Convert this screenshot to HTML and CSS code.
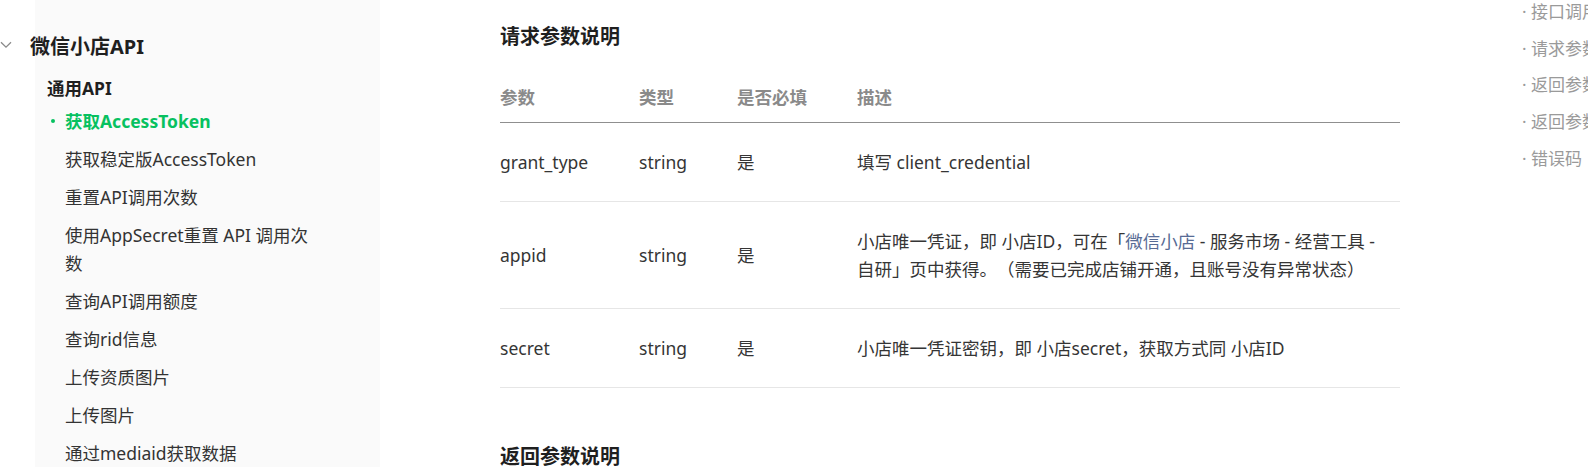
FILE: index.html
```html
<!DOCTYPE html>
<html lang="zh-CN">
<head>
<meta charset="utf-8">
<title>获取AccessToken</title>
<link rel="stylesheet" href="styles.css">
</head>
<body>
<div class="page">
  <nav class="sidebar">
    <div class="group-title">
      <svg class="chevron" width="12" height="8" viewBox="0 0 12 8"><path d="M1 1.2 L6 6.2 L11 1.2" fill="none" stroke="#8a8a8a" stroke-width="1.3"/></svg>
      <span>微信小店API</span>
    </div>
    <div class="sub-title">通用API</div>
    <ul class="items">
      <li class="item active">获取AccessToken</li>
      <li class="item">获取稳定版AccessToken</li>
      <li class="item">重置API调用次数</li>
      <li class="item">使用AppSecret重置 API 调用次数</li>
      <li class="item">查询API调用额度</li>
      <li class="item">查询rid信息</li>
      <li class="item">上传资质图片</li>
      <li class="item">上传图片</li>
      <li class="item">通过mediaid获取数据</li>
    </ul>
  </nav>

  <main class="main">
    <h2 class="section-title">请求参数说明</h2>
    <table class="params">
      <thead>
        <tr>
          <th class="c-name">参数</th>
          <th class="c-type">类型</th>
          <th class="c-req">是否必填</th>
          <th class="c-desc">描述</th>
        </tr>
      </thead>
      <tbody>
        <tr>
          <td>grant_type</td>
          <td>string</td>
          <td>是</td>
          <td class="desc">填写 client_credential</td>
        </tr>
        <tr>
          <td>appid</td>
          <td>string</td>
          <td>是</td>
          <td class="desc">小店唯一凭证，即 小店ID，可在「<a class="link">微信小店</a> - 服务市场 - 经营工具 - 自研」页中获得。（需要已完成店铺开通，且账号没有异常状态）</td>
        </tr>
        <tr>
          <td>secret</td>
          <td>string</td>
          <td>是</td>
          <td class="desc">小店唯一凭证密钥，即 小店secret，获取方式同 小店ID</td>
        </tr>
      </tbody>
    </table>
    <h2 class="section-title second">返回参数说明</h2>
  </main>

  <aside class="toc">
    <ul>
      <li>· 接口调用请求说明</li>
      <li>· 请求参数说明</li>
      <li>· 返回参数说明</li>
      <li>· 返回参数示例</li>
      <li>· 错误码</li>
    </ul>
  </aside>
</div>
</body>
</html>
```

FILE: styles.css
```css
html, body {
  margin: 0;
  padding: 0;
  background: #fff;
  overflow: hidden;
}

body {
  font-family: "Noto Sans", "Noto Sans CJK SC", sans-serif;
  color: #353535;
  font-size: 17.5px;
  text-spacing-trim: space-all;
}

.page {
  display: flex;
  align-items: flex-start;
  width: 1588px;
  height: 467px;
  overflow: hidden;
}

/* ---------- sidebar ---------- */
.sidebar {
  flex: none;
  width: 380px;
  height: 467px;
  box-sizing: border-box;
  padding-top: 30px;
  background: linear-gradient(to right, #fff 35px, #fafafa 35px);
}

.group-title {
  display: flex;
  align-items: center;
  gap: 18px;
  height: 30px;
  margin-bottom: 14px;
  font-size: 20px;
  font-weight: 700;
  color: #1f1f1f;
}

.chevron {
  flex: none;
  display: block;
}

.sub-title {
  padding-left: 47px;
  line-height: 28px;
  font-weight: 700;
  color: #1f1f1f;
}

.items {
  list-style: none;
  margin: 0;
  padding: 0 0 0 65px;
  width: 260px;
}

.item {
  position: relative;
  padding: 5px 0;
  line-height: 28px;
  color: #333;
}

.item.active {
  color: #07c160;
  font-weight: 700;
}

.item.active::before {
  content: "";
  position: absolute;
  left: -14px;
  top: 17px;
  width: 4px;
  height: 4px;
  border-radius: 50%;
  background: #07c160;
}

/* ---------- main ---------- */
.main {
  flex: none;
  width: 900px;
  margin-left: 120px;
}

.section-title {
  margin: 22px 0 6px;
  font-size: 20px;
  line-height: 30px;
  font-weight: 700;
  color: #1f1f1f;
}

.section-title.second {
  margin-top: 54px;
}

.params {
  width: 900px;
  border-collapse: collapse;
  table-layout: fixed;
}

.params th,
.params td {
  box-sizing: border-box;
  padding: 25px 10px 25px 0;
  line-height: 28px;
  text-align: left;
  vertical-align: middle;
}

.params th {
  padding-bottom: 11px;
  color: #8a8a8a;
  font-weight: 700;
  border-bottom: 1px solid #8f8f8f;
}

.params td {
  border-bottom: 1px solid #e6e6e6;
  color: #353535;
}

.c-name { width: 139px; }
.c-type { width: 98px; }
.c-req  { width: 120px; }

.link {
  color: #576b95;
  text-decoration: none;
}

/* ---------- toc ---------- */
.toc {
  flex: none;
  margin-left: 122px;
  white-space: nowrap;
}

.toc ul {
  list-style: none;
  margin: 0;
  padding: 0;
}

.toc li {
  line-height: 24px;
  margin-bottom: 12.7px;
  font-size: 17px;
  color: #9a9a9a;
}
```
